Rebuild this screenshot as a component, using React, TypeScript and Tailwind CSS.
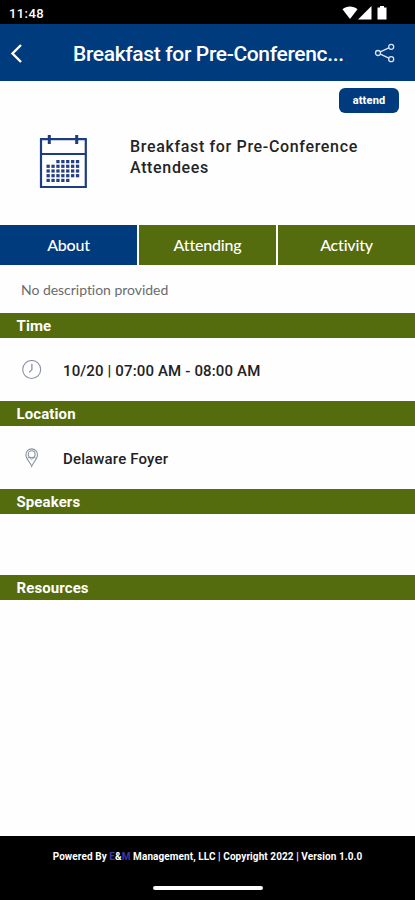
import React from "react";

function StatusBar() {
  return (
    <div className="flex h-6 shrink-0 items-center justify-between bg-black pl-[9px] pr-[27px] text-white">
      <span className="pt-[3px] text-[13px] font-medium leading-none tracking-[0.4px]">11:48</span>
      <svg className="mt-[2px]" width="46" height="14" viewBox="0 0 46 14" fill="#fff">
        <path d="M0.5 3.3C4.8-.4 11.2-.4 15.5 3.3L8 13Z" />
        <path d="M29.5 0V13.5H16Z" />
        <path d="M38 0h4v1.5h2.5v12h-9V1.5H38Z" />
      </svg>
    </div>
  );
}

function Header() {
  return (
    <header className="flex h-[57px] shrink-0 items-center bg-[#003b7d] text-white">
      <svg className="ml-[9px]" width="16" height="20" viewBox="0 0 16 20" fill="none" stroke="#fff" strokeWidth="2.4">
        <path d="M12 2L3.5 10.5L12 19" />
      </svg>
      <h1 className="ml-12 w-[280px] whitespace-nowrap pt-[2px] text-[21px] font-medium leading-[28px] tracking-[-0.35px]">
        Breakfast for Pre-Conferenc...
      </h1>
      <svg className="ml-[21px]" width="22" height="20" viewBox="0 0 22 20" fill="none" stroke="#dce4f5" strokeWidth="1.3">
        <circle cx="4" cy="10" r="2.5" />
        <circle cx="17.2" cy="3.8" r="2.5" />
        <circle cx="17.2" cy="16.2" r="2.5" />
        <path d="M6.3 8.9L14.9 4.9M6.3 11.1L14.9 15.1" />
      </svg>
    </header>
  );
}

const dayRows = [
  { y: 25, from: 2, to: 6 },
  { y: 29.7, from: 0, to: 6 },
  { y: 34.4, from: 0, to: 6 },
  { y: 39.1, from: 0, to: 6 },
  { y: 43.8, from: 0, to: 4 },
];

function CalendarIcon() {
  return (
    <svg width="48" height="54" viewBox="0 0 48 54" fill="none" stroke="#1d3c82">
      <path d="M2 4.2H46.8V52H2Z" strokeWidth="2.2" />
      <path d="M1.5 19H47" strokeWidth="2" />
      <path d="M10.3 0V9M37.7 0V9" strokeWidth="3" />
      {dayRows.map((row) =>
        Array.from({ length: row.to - row.from + 1 }, (_, i) => (
          <rect key={`${row.y}-${i}`} x={7.5 + (row.from + i) * 4.9} y={row.y} width="3.3" height="3.2" fill="#243f86" stroke="none" />
        )),
      )}
    </svg>
  );
}

function Hero() {
  return (
    <section className="flex h-36 shrink-0 flex-col">
      <button className="mr-[16px] mt-[7px] h-[25px] w-[60px] self-end rounded-[6px] bg-[#003b7d] pt-px text-[11px] font-extrabold leading-[24px] tracking-[0.15px] text-white">
        attend
      </button>
      <div className="mt-[22px] flex">
        <div className="ml-[39px] w-[91px]">
          <CalendarIcon />
        </div>
        <h2 className="mt-[2px] text-[16px] font-medium leading-[20.5px] tracking-[0.66px] text-[#242424]">
          Breakfast for Pre-Conference
          <br />
          Attendees
        </h2>
      </div>
    </section>
  );
}

function Tabs() {
  return (
    <nav className="grid h-[40px] shrink-0 grid-cols-[137px_137px_137px] gap-x-[2px] bg-white text-center font-['Lato',sans-serif] text-[16px] font-medium leading-[40px] tracking-[-0.2px] text-white">
      <span className="bg-[#003b7d]">About</span>
      <span className="bg-[#546b0e]">Attending</span>
      <span className="bg-[#546b0e]">Activity</span>
    </nav>
  );
}

function SectionBar({ title }: { title: string }) {
  return (
    <h3 className="h-[25px] shrink-0 bg-[#546b0e] pl-[16.5px] pt-px text-[15px] font-bold leading-[25px] tracking-[0.1px] text-white">{title}</h3>
  );
}

function ClockIcon() {
  return (
    <svg width="20" height="20" viewBox="0 0 20 20" fill="none" stroke="#8b91a5">
      <circle cx="9.7" cy="9.5" r="9" strokeWidth="1.1" />
      <path d="M9.9 3.8V9.6L7.2 12.4" strokeWidth="1.3" />
    </svg>
  );
}

function PinIcon() {
  return (
    <svg width="20" height="20" viewBox="0 0 20 20" fill="none" stroke="#8b91a0" strokeWidth="1.1">
      <path d="M9.7 18.2C8.2 14.5 3.9 11 3.9 6.8C3.9 3.5 6.4 .9 9.7 .9S15.5 3.5 15.5 6.8C15.5 11 11.2 14.5 9.7 18.2Z" />
      <circle cx="9.7" cy="6.2" r="3.4" />
      <path d="M5.2 11C6 8.8 7.5 9.3 9.7 11.6C11.9 9.3 13.4 8.8 14.2 11" strokeWidth=".9" />
    </svg>
  );
}

function DetailRow({ icon, children }: { icon: React.ReactNode; children: React.ReactNode }) {
  return (
    <div className="flex h-[63px] shrink-0 items-center pl-[22px] text-[15px] font-medium tracking-[0.15px] text-[#222]">
      {icon}
      <span className="ml-[21px] pt-[3px]">{children}</span>
    </div>
  );
}

function Footer() {
  return (
    <footer className="mt-auto flex h-16 shrink-0 flex-col items-center bg-black text-white">
      <p className="mt-[14px] whitespace-nowrap text-[10px] font-bold leading-[14px] tracking-[0.08px]">
        Powered By <span className="text-[#4038a0]">E</span>&amp;<span className="text-[#4038a0]">M</span> Management, LLC | Copyright 2022 | Version 1.0.0
      </p>
      <div className="mt-[22px] h-1 w-[110px] rounded-full bg-white" />
    </footer>
  );
}

export default function App() {
  return (
    <main className="flex h-[900px] w-[415px] flex-col overflow-hidden bg-[#fefefe] font-['Roboto',sans-serif]">
      <StatusBar />
      <Header />
      <Hero />
      <Tabs />
      <p className="h-[48px] shrink-0 pl-[21px] font-['Lato',sans-serif] text-[14px] leading-[49px] tracking-[-0.03px] text-[#6c6c6c]">
        No description provided
      </p>
      <SectionBar title="Time" />
      <DetailRow icon={<ClockIcon />}>10/20 | 07:00 AM - 08:00 AM</DetailRow>
      <SectionBar title="Location" />
      <DetailRow icon={<PinIcon />}>Delaware Foyer</DetailRow>
      <SectionBar title="Speakers" />
      <div className="h-[61px] shrink-0" />
      <SectionBar title="Resources" />
      <Footer />
    </main>
  );
}
